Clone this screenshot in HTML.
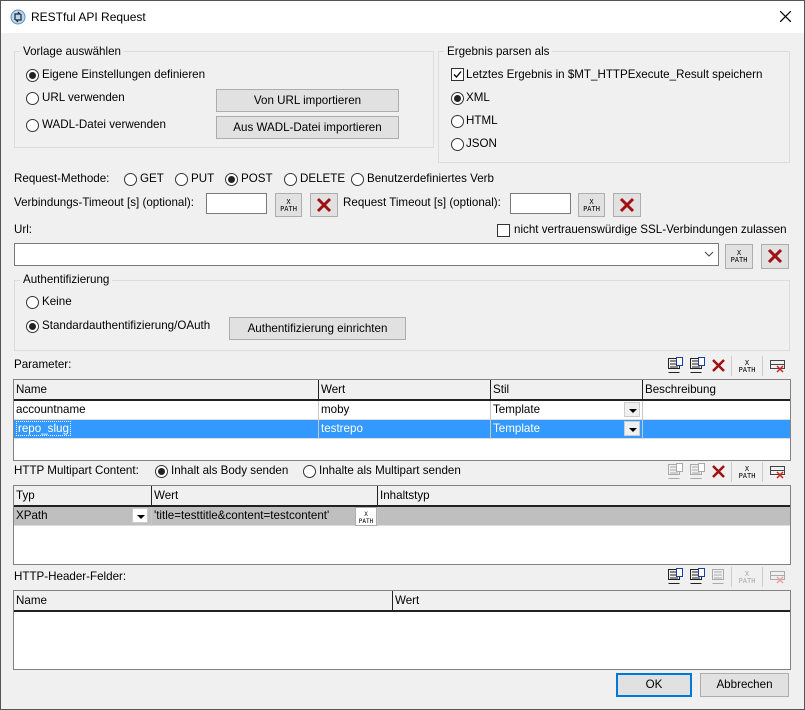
<!DOCTYPE html><html><head><meta charset="utf-8"><style>
*{box-sizing:border-box;margin:0;padding:0}
body{width:805px;height:710px;background:#f0f0f0;font-family:"Liberation Sans",sans-serif;font-size:11.6px;color:#000;position:relative;overflow:hidden}
.a{position:absolute}
.t{position:absolute;white-space:nowrap;line-height:14px}
.grp{position:absolute;border:1px solid #dcdcdc}
.gl{position:absolute;background:#f0f0f0;padding:0 3px;white-space:nowrap;line-height:14px}
.r{position:absolute;width:13px;height:13px;border:1px solid #333;border-radius:50%;background:#fff}
.r.on::after{content:"";position:absolute;left:2px;top:2px;width:7px;height:7px;border-radius:50%;background:#222}
.cb{position:absolute;width:13px;height:13px;border:1px solid #333;background:#fff}
.btn{position:absolute;background:#e1e1e1;border:1px solid #adadad;text-align:center;white-space:nowrap}
.inp{position:absolute;background:#fff;border:1px solid #7a7a7a}
.xp{position:absolute;background:#e1e1e1;border:1px solid #adadad;font-family:"DejaVu Sans Mono",monospace;font-size:7px;line-height:7px;text-align:center;padding-top:5px}
.xb{position:absolute;background:#e1e1e1;border:1px solid #adadad}
.tbl{position:absolute;background:#fff;border:1px solid #828282}
.hd{position:absolute;background:#f0f0f0;border-bottom:2px solid #222;height:21px}
.c{position:absolute;top:0;height:100%;border-left:1px solid #222;padding-left:2px;line-height:19px;white-space:nowrap}
.row{position:absolute;height:19px;border-bottom:1px solid #ddd}
.rc{position:absolute;top:0;height:19px;border-left:1px solid #c8c8c8;padding-left:2px;line-height:18px;white-space:nowrap}
.dd{position:absolute;width:16px;height:15px;background:#f0f0f0;border:1px solid #ccc;top:1px}
.dd::after{content:"";position:absolute;left:4px;top:6px;border:4px solid transparent;border-top:4px solid #000;border-bottom:0}
</style></head><body>
<div class="a" style="left:0;top:0;width:805px;height:710px;border:1px solid #555;pointer-events:none;z-index:9"></div>
<div class="a" style="left:1px;top:1px;width:803px;height:32px;background:#fff"></div>
<svg class="a" style="left:10px;top:9px" width="16" height="16"><circle cx="8" cy="8" r="7" fill="#bcd6f0" stroke="#5b8fc7"/><path d="M5 11V5h5l-2-2M11 5v6H6l2 2" fill="none" stroke="#222" stroke-width="1.2"/></svg>
<div class="t" style="left:31px;top:10px;font-size:12px">RESTful API Request</div>
<svg class="a" style="left:780px;top:11px" width="11" height="11"><path d="M0 0L11 11M11 0L0 11" stroke="#000" stroke-width="1.2"/></svg>

<div class="grp" style="left:14px;top:51px;width:420px;height:97px"></div>
<div class="gl" style="left:20px;top:45px">Vorlage auswählen</div>
<div class="r on" style="left:26px;top:69px"></div><div class="t" style="left:42px;top:68px">Eigene Einstellungen definieren</div>
<div class="r" style="left:26px;top:92px"></div><div class="t" style="left:42px;top:91px">URL verwenden</div>
<div class="r" style="left:26px;top:119px"></div><div class="t" style="left:42px;top:118px">WADL-Datei verwenden</div>
<div class="btn" style="left:216px;top:89px;width:183px;height:23px;line-height:21px">Von URL importieren</div>
<div class="btn" style="left:216px;top:116px;width:183px;height:23px;line-height:21px">Aus WADL-Datei importieren</div>

<div class="grp" style="left:438px;top:51px;width:352px;height:112px"></div>
<div class="gl" style="left:444px;top:45px">Ergebnis parsen als</div>
<div class="cb" style="left:451px;top:68px"></div><svg class="a" style="left:452px;top:69px" width="11" height="11"><path d="M2 5.5l2.5 2.5L9 2.5" fill="none" stroke="#000" stroke-width="1.3"/></svg>
<div class="t" style="left:466px;top:68px">Letztes Ergebnis in $MT_HTTPExecute_Result speichern</div>
<div class="r on" style="left:451px;top:92px"></div><div class="t" style="left:466px;top:91px">XML</div>
<div class="r" style="left:451px;top:115px"></div><div class="t" style="left:466px;top:114px">HTML</div>
<div class="r" style="left:451px;top:138px"></div><div class="t" style="left:466px;top:137px">JSON</div>

<div class="t" style="left:14px;top:172px">Request-Methode:</div>
<div class="r" style="left:124px;top:173px"></div><div class="t" style="left:140px;top:172px">GET</div>
<div class="r" style="left:175px;top:173px"></div><div class="t" style="left:191px;top:172px">PUT</div>
<div class="r on" style="left:225px;top:173px"></div><div class="t" style="left:241px;top:172px">POST</div>
<div class="r" style="left:284px;top:173px"></div><div class="t" style="left:300px;top:172px">DELETE</div>
<div class="r" style="left:351px;top:173px"></div><div class="t" style="left:367px;top:172px">Benutzerdefiniertes Verb</div>

<div class="t" style="left:14px;top:196px">Verbindungs-Timeout [s] (optional):</div>
<div class="inp" style="left:206px;top:193px;width:61px;height:21px"></div>
<div class="xp" style="left:275px;top:193px;width:27px;height:24px">X<br>PATH</div>
<div class="xb" style="left:310px;top:193px;width:28px;height:24px"><svg width="26" height="22"><path d="M7 5L19 17M19 5L7 17" stroke="#a01010" stroke-width="3"/></svg></div>
<div class="t" style="left:343px;top:196px">Request Timeout [s] (optional):</div>
<div class="inp" style="left:510px;top:193px;width:61px;height:21px"></div>
<div class="xp" style="left:578px;top:193px;width:27px;height:24px">X<br>PATH</div>
<div class="xb" style="left:613px;top:193px;width:28px;height:24px"><svg width="26" height="22"><path d="M7 5L19 17M19 5L7 17" stroke="#a01010" stroke-width="3"/></svg></div>

<div class="t" style="left:14px;top:223px">Url:</div>
<div class="cb" style="left:497px;top:224px"></div><div class="t" style="left:514px;top:223px">nicht vertrauenswürdige SSL-Verbindungen zulassen</div>
<div class="inp" style="left:14px;top:243px;width:705px;height:23px"></div>
<svg class="a" style="left:704px;top:251px" width="10" height="6"><path d="M1 1l4 4 4-4" fill="none" stroke="#444"/></svg>
<div class="xp" style="left:725px;top:244px;width:28px;height:25px">X<br>PATH</div>
<div class="xb" style="left:761px;top:244px;width:28px;height:25px"><svg width="26" height="23"><path d="M7 5L19 17M19 5L7 17" stroke="#a01010" stroke-width="3"/></svg></div>

<div class="grp" style="left:14px;top:280px;width:776px;height:71px"></div>
<div class="gl" style="left:20px;top:273px">Authentifizierung</div>
<div class="r" style="left:26px;top:296px"></div><div class="t" style="left:42px;top:295px">Keine</div>
<div class="r on" style="left:26px;top:320px"></div><div class="t" style="left:42px;top:319px">Standardauthentifizierung/OAuth</div>
<div class="btn" style="left:229px;top:317px;width:177px;height:23px;line-height:21px">Authentifizierung einrichten</div>

<div class="t" style="left:14px;top:358px">Parameter:</div>
<svg class="a" style="left:666px;top:356px" width="128" height="20">
<g fill="none" stroke="#222"><rect x="2.5" y="2.5" width="11" height="10"/><path d="M4 5h8M4 8h8M4 11h8M2.5 16.5h11"/><rect x="10.5" y="1.5" width="6" height="8" fill="#fff" stroke="#1a3fa0"/></g>
<g fill="none" stroke="#222" transform="translate(22,0)"><rect x="2.5" y="2.5" width="11" height="10"/><path d="M4 5h8M4 8h8M4 11h8M2.5 16.5h11"/><rect x="10.5" y="1.5" width="6" height="8" fill="#fff" stroke="#1a3fa0"/></g>
<path d="M47 4L58 15M58 4L47 15" stroke="#a01010" stroke-width="2.5"/>
<path d="M65.5 0v20M96.5 0v20" stroke="#ccc"/>
<text x="81" y="9" font-size="7" font-family="DejaVu Sans Mono" text-anchor="middle">X</text><text x="81" y="16" font-size="7" font-family="DejaVu Sans Mono" text-anchor="middle">PATH</text>
<g fill="none" stroke="#444"><rect x="104.5" y="4.5" width="14" height="8"/><path d="M104 8.5h15"/></g><path d="M111 10l6 6M117 10l-6 6" stroke="#d02020" stroke-width="1.5"/>
</svg>
<div class="tbl" style="left:13px;top:379px;width:778px;height:82px">
<div class="hd" style="left:0;top:0;width:776px"><div class="c" style="left:0;border-left:0">Name</div><div class="c" style="left:304px">Wert</div><div class="c" style="left:476px">Stil</div><div class="c" style="left:628px">Beschreibung</div></div>
<div class="row" style="left:0;top:21px;width:776px"><div class="rc" style="left:0;border:0">accountname</div><div class="rc" style="left:304px">moby</div><div class="rc" style="left:476px;width:152px">Template<div class="dd" style="right:2px"></div></div><div class="rc" style="left:628px"></div></div>
<div class="row" style="left:0;top:40px;width:776px;background:#3399ff;color:#fff"><div class="rc" style="left:0;border:0"><span style="border:1px dotted #fff;padding:0 1px">repo_slug</span></div><div class="rc" style="left:304px">testrepo</div><div class="rc" style="left:476px;width:152px">Template<div class="dd" style="right:2px"></div></div><div class="rc" style="left:628px"></div></div>
</div>

<div class="t" style="left:14px;top:464px">HTTP Multipart Content:</div>
<div class="r on" style="left:155px;top:465px"></div><div class="t" style="left:171px;top:464px">Inhalt als Body senden</div>
<div class="r" style="left:303px;top:465px"></div><div class="t" style="left:319px;top:464px">Inhalte als Multipart senden</div>
<svg class="a" style="left:666px;top:462px" width="128" height="20">
<g fill="none" stroke="#aaa"><rect x="2.5" y="2.5" width="11" height="10"/><path d="M4 5h8M4 8h8M4 11h8M2.5 16.5h11"/><rect x="10.5" y="1.5" width="6" height="8" fill="#fff"/></g>
<g fill="none" stroke="#aaa" transform="translate(22,0)"><rect x="2.5" y="2.5" width="11" height="10"/><path d="M4 5h8M4 8h8M4 11h8M2.5 16.5h11"/><rect x="10.5" y="1.5" width="6" height="8" fill="#fff"/></g>
<path d="M47 4L58 15M58 4L47 15" stroke="#a01010" stroke-width="2.5"/>
<path d="M65.5 0v20M96.5 0v20" stroke="#ccc"/>
<text x="81" y="9" font-size="7" font-family="DejaVu Sans Mono" text-anchor="middle">X</text><text x="81" y="16" font-size="7" font-family="DejaVu Sans Mono" text-anchor="middle">PATH</text>
<g fill="none" stroke="#444"><rect x="104.5" y="4.5" width="14" height="8"/><path d="M104 8.5h15"/></g><path d="M111 10l6 6M117 10l-6 6" stroke="#d02020" stroke-width="1.5"/>
</svg>
<div class="tbl" style="left:13px;top:485px;width:778px;height:80px">
<div class="hd" style="left:0;top:0;width:776px"><div class="c" style="left:0;border-left:0">Typ</div><div class="c" style="left:137px">Wert</div><div class="c" style="left:363px">Inhaltstyp</div></div>
<div class="row" style="left:0;top:21px;width:776px;background:#bfbfbf"><div class="rc" style="left:0;border:0;width:137px">XPath<div class="dd" style="right:3px;background:#fff"></div></div><div class="rc" style="left:137px;width:226px">'title=testtitle&amp;content=testcontent'<div class="xp" style="right:0;top:0;width:22px;height:19px;background:#fff;padding-top:3px;font-size:6px">X<br>PATH</div></div><div class="rc" style="left:363px"></div></div>
</div>

<div class="t" style="left:14px;top:570px">HTTP-Header-Felder:</div>
<svg class="a" style="left:666px;top:567px" width="128" height="20">
<g fill="none" stroke="#222"><rect x="2.5" y="2.5" width="11" height="10"/><path d="M4 5h8M4 8h8M4 11h8M2.5 16.5h11"/><rect x="10.5" y="1.5" width="6" height="8" fill="#fff" stroke="#1a3fa0"/></g>
<g fill="none" stroke="#222" transform="translate(22,0)"><rect x="2.5" y="2.5" width="11" height="10"/><path d="M4 5h8M4 8h8M4 11h8M2.5 16.5h11"/><rect x="10.5" y="1.5" width="6" height="8" fill="#fff" stroke="#1a3fa0"/></g>
<g fill="none" stroke="#aaa"><rect x="46.5" y="2.5" width="11" height="10"/><path d="M48 5h8M48 8h8M48 11h8M46.5 16.5h11"/></g>
<path d="M65.5 0v20M96.5 0v20" stroke="#ccc"/>
<text x="81" y="9" font-size="7" font-family="DejaVu Sans Mono" text-anchor="middle" fill="#aaa">X</text><text x="81" y="16" font-size="7" font-family="DejaVu Sans Mono" text-anchor="middle" fill="#aaa">PATH</text>
<g fill="none" stroke="#aaa"><rect x="104.5" y="4.5" width="14" height="8"/><path d="M104 8.5h15"/></g><path d="M111 10l6 6M117 10l-6 6" stroke="#e8a0a0" stroke-width="1.5"/>
</svg>
<div class="tbl" style="left:13px;top:590px;width:778px;height:80px">
<div class="hd" style="left:0;top:0;width:776px"><div class="c" style="left:0;border-left:0">Name</div><div class="c" style="left:378px">Wert</div></div>
</div>

<div class="btn" style="left:616px;top:673px;width:76px;height:24px;line-height:20px;border:2px solid #0078d7">OK</div>
<div class="btn" style="left:700px;top:673px;width:89px;height:24px;line-height:22px">Abbrechen</div>
</body></html>
